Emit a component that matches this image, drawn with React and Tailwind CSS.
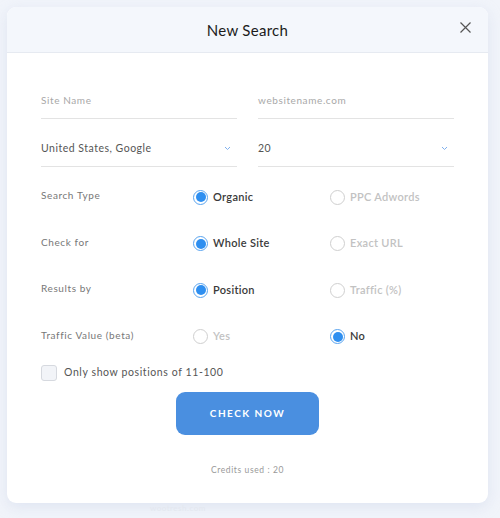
import React, { useState } from 'react'

const ROWS = [
  { id: 'type',    label: 'Search Type',         opts: ['Organic', 'PPC Adwords'],     sel: 0 },
  { id: 'check',   label: 'Check for',           opts: ['Whole Site', 'Exact URL'],    sel: 0 },
  { id: 'results', label: 'Results by',          opts: ['Position', 'Traffic (%)'],    sel: 0 },
  { id: 'traffic', label: 'Traffic Value (beta)', opts: ['Yes', 'No'],                 sel: 1 },
]

function Chevron() {
  return (
    <svg width="7" height="5" viewBox="0 0 7 5" fill="none">
      <path d="M1 1l2.5 2.5L6 1" stroke="#7fb0ee" strokeWidth="1" />
    </svg>
  )
}

function Radio({ label, on, onClick }) {
  return (
    <button onClick={onClick} className="flex items-center gap-[5px] w-[137px] shrink-0">
      {on ? (
        <span className="w-[15px] h-[15px] rounded-full border border-[#5aa4ef] flex items-center justify-center">
          <span className="w-[10px] h-[10px] rounded-full bg-[#2f8ff0]" />
        </span>
      ) : (
        <span className="w-[15px] h-[15px] rounded-full border border-[#cfcfcf]" />
      )}
      <span className={`text-[11px] font-semibold tracking-[0.3px] ${on ? 'text-[#3a3a3a]' : 'text-[#c2c2c2]'}`}>{label}</span>
    </button>
  )
}

export default function App() {
  const [sel, setSel] = useState(Object.fromEntries(ROWS.map((r) => [r.id, r.sel])))
  const [only, setOnly] = useState(false)

  return (
    <div className="w-[500px] h-[518px] bg-[#f1f4fa] pt-[7px] pl-[7px]" style={{ fontFamily: 'Lato, "Open Sans", sans-serif' }}>
      <div className="w-[481px] h-[496px] bg-white rounded-[9px] overflow-hidden shadow-[0_4px_14px_rgba(190,200,225,0.35)] flex flex-col">
        {/* Header */}
        <div className="h-[46px] bg-[#f4f7fc] border-b border-[#e6eaf1] flex items-center justify-center relative shrink-0">
          <h2 className="text-[15px] text-[#1b1b1b] tracking-[0.3px] pt-[1px]">New Search</h2>
          <button className="absolute right-[16px] top-[14px] w-[13px] h-[13px]">
            <svg width="13" height="13" viewBox="0 0 13 13" fill="none">
              <path d="M1.5 1.5l10 10M11.5 1.5l-10 10" stroke="#555" strokeWidth="1.2" />
            </svg>
          </button>
        </div>

        <div className="px-[34px] pt-[34px] flex flex-col">
          {/* Text inputs */}
          <div className="flex gap-[21px]">
            <div className="w-[196px] h-[32px] border-b border-[#e3e3e3] text-[10px] tracking-[0.6px] text-[#a8a8a8] pt-[6px]">Site Name</div>
            <div className="w-[196px] h-[32px] border-b border-[#e3e3e3] text-[10px] tracking-[0.6px] text-[#a8a8a8] pt-[6px]">websitename.com</div>
          </div>
          <div className="flex gap-[21px] mt-[16px]">
            <div className="w-[196px] h-[32px] border-b border-[#e3e3e3] flex items-start justify-between pt-[6px] pr-[6px]">
              <span className="text-[10.5px] tracking-[0.5px] text-[#555]">United States, Google</span>
              <span className="pt-[5px]"><Chevron /></span>
            </div>
            <div className="w-[196px] h-[32px] border-b border-[#e3e3e3] flex items-start justify-between pt-[6px] pr-[6px]">
              <span className="text-[10.5px] tracking-[0.5px] text-[#555]">20</span>
              <span className="pt-[5px]"><Chevron /></span>
            </div>
          </div>

          {/* Radio rows */}
          <div className="flex flex-col mt-[22px] gap-[30.5px]">
            {ROWS.map((r) => (
              <div key={r.id} className="flex items-center h-[16px]">
                <span className="w-[152px] shrink-0 text-[10px] tracking-[0.6px] text-[#777] -mt-[3px]">{r.label}</span>
                {r.opts.map((o, i) => (
                  <Radio key={o} label={o} on={sel[r.id] === i} onClick={() => setSel({ ...sel, [r.id]: i })} />
                ))}
              </div>
            ))}
          </div>

          {/* Checkbox */}
          <button onClick={() => setOnly(!only)} className="flex items-center gap-[7px] mt-[20px]">
            <span className={`w-[16px] h-[16px] rounded-[3px] border border-[#d6d9df] ${only ? 'bg-[#2f8ff0]' : 'bg-[#f2f4f8]'}`} />
            <span className="text-[10.5px] tracking-[0.6px] text-[#555]">Only show positions of 11-100</span>
          </button>

          <div className="flex justify-center mt-[11px]">
            <button className="w-[143px] h-[43px] rounded-[9px] bg-[#4a8fe0] text-white text-[10px] font-bold tracking-[1.5px]">
              CHECK NOW
            </button>
          </div>

          <p className="text-center text-[8.5px] tracking-[0.6px] text-[#999] mt-[29px]">Credits used : 20</p>
        </div>
      </div>
      <p className="text-[8px] text-[#e3e7ef] pl-[143px] -mt-[1px] tracking-[0.5px]">wootresh.com</p>
    </div>
  )
}
